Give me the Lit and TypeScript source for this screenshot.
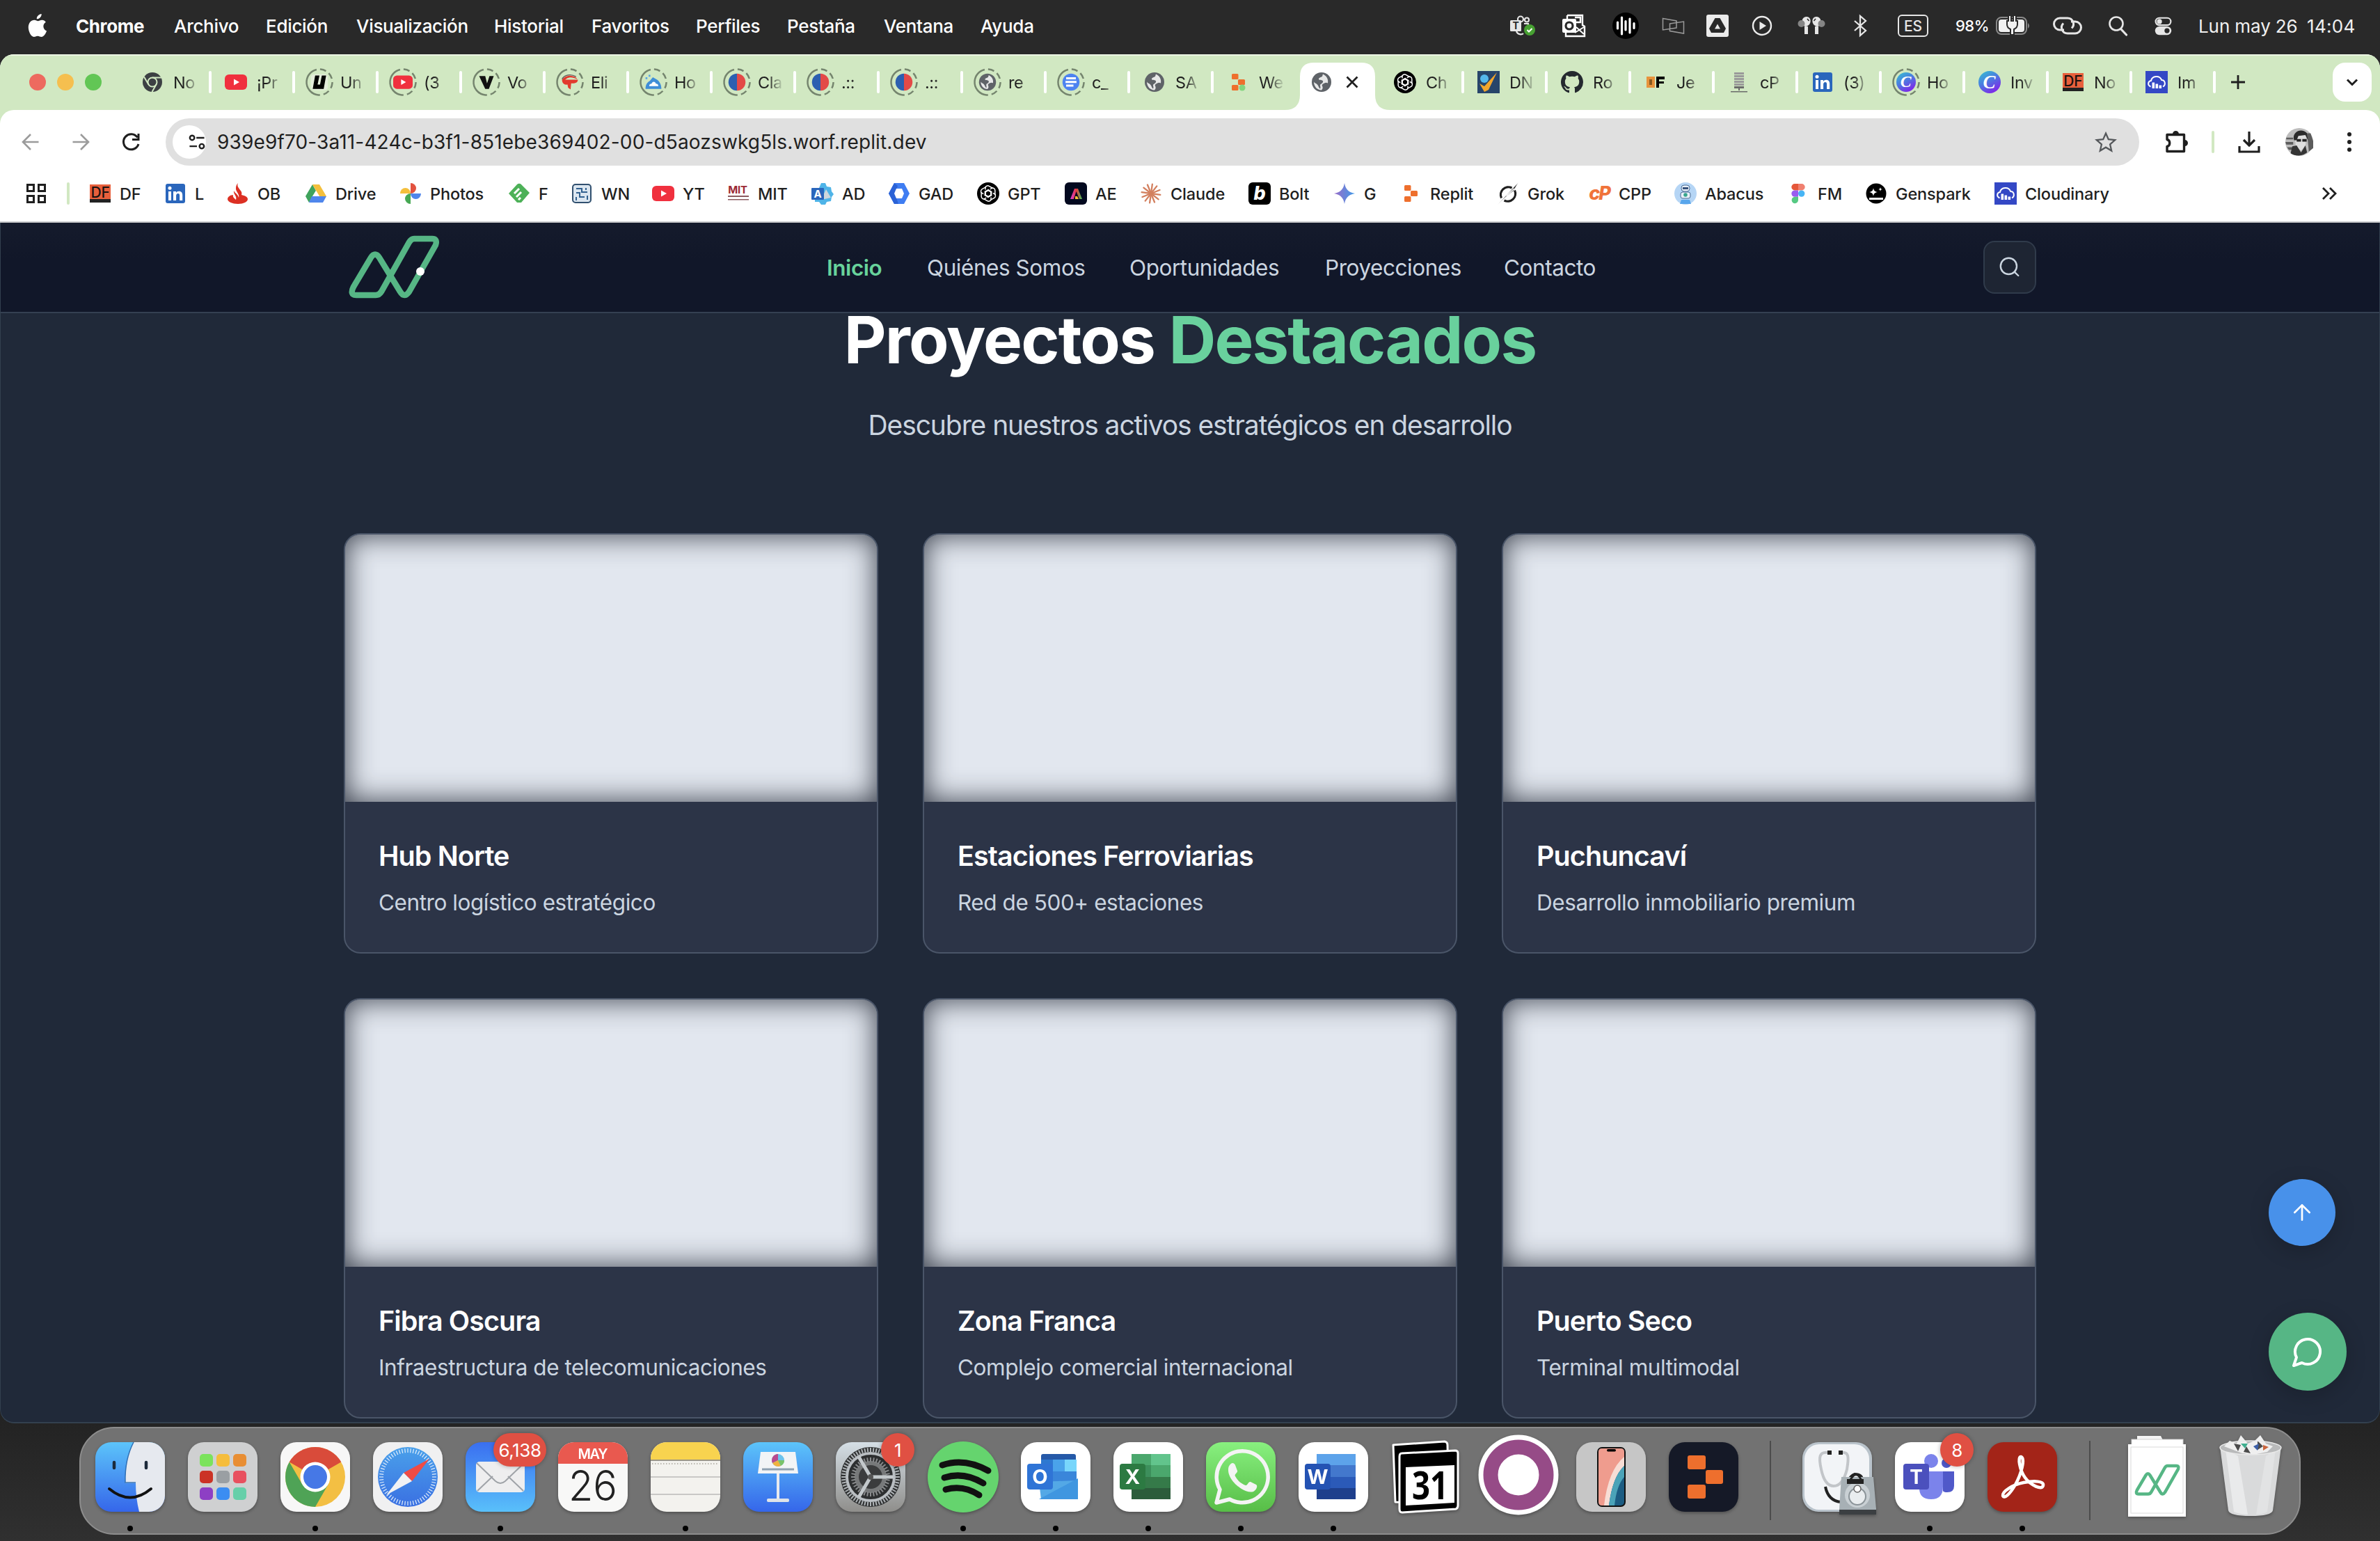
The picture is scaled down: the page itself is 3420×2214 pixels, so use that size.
import { LitElement, html, svg, css, nothing } from "lit";
import { customElement, property } from "lit/decorators.js";
import { styleMap } from "lit/directives/style-map.js";

/* ---------- small icons, drawn on a 32 x 32 board ---------- */

const txt = (s: string, x: number, y: number, size: number, fill: string) =>
  svg`<text x=${x} y=${y} font-size=${size} fill=${fill} text-anchor="middle" font-weight="700" font-family="Inter, 'Liberation Sans', sans-serif">${s}</text>`;

const globe = svg`<circle cx="16" cy="16" r="14" fill="#5f6368"/><path d="M18 4.500c-1 2 0 3-2 4s-4 1-4 3 3 1 5 2 1 3 0 4-3 1-3 3 1 3 0 5c-2-1-2-4-4-6s-4-2-5-4c0 7 5 12 11 12 2-2 2-4 1-6s1-3 3-4 3-1 5 0c1-5-1-10-7-13z" fill="#fff" opacity=".85"/>`;
const youtube = svg`<rect x="0" y="5" width="32" height="22" rx="6" fill="#f0303e"/><path d="M13 11.500l8 4.500-8 4.500z" fill="#fff"/>`;
const linkedin = svg`<rect x="2" y="2" width="28" height="28" rx="3" fill="#2a66bc"/><circle cx="8" cy="8.300" r="2.500" fill="#fff"/><path d="M6 13h4v13H6zM13 13h4v2c1-1.600 2.400-2.300 4.200-2.300 3.600 0 5 2.200 5 5.800V26h-4.100v-6.800c0-2-.6-3.100-2.300-3.100-1.800 0-2.700 1.300-2.700 3.200V26H13z" fill="#fff"/>`;
const dfRed = svg`<rect x="1" y="3" width="30" height="26" fill="#e8603c"/><rect x="1" y="24" width="30" height="5" fill="#222"/><text x="16" y="22" font-size="21" fill="#1a1210" text-anchor="middle" font-weight="500" font-family="Inter, sans-serif">DF</text>`;
const gpt = svg`<circle cx="16" cy="16" r="16" fill="#000"/><g fill="none" stroke="#fff" stroke-width="1.500">${[0, 60, 120, 180, 240, 300].map((a) => svg`<path d="M12 10.500V7.600c0-2 3-3.600 5.200-2.300l5.400 3.200M16 11.600l4.600 2.700v5.300" transform="rotate(${a} 16 16)"/>`)}</g>`;
const cloudinary = svg`<rect width="32" height="32" fill="#3448c5"/><path d="M7.500 22.500C2.500 20.500 3.500 14.500 8 14 9.500 6.500 20.500 6 23.200 13 28.500 13.200 29.500 20 25 22.500" fill="none" stroke="#fff" stroke-width="2"/><path d="M9.500 16.500h3.600V25H9.500zM14.500 18.500h3.600V25h-3.600zM19.500 20.500h3.600V25h-3.600z" fill="#fff"/>`;
const replit = svg`<g fill="#ee6f2d"><rect x="7" y="4" width="9.500" height="8" rx="1.500"/><rect x="16" y="12" width="10" height="8" rx="1.500"/><rect x="7" y="20" width="9.500" height="8" rx="1.500"/></g>`;
const canva = svg`<circle cx="16" cy="16" r="16" fill="url(#canva)"/><text x="15.500" y="24.500" font-size="27" font-style="italic" font-weight="700" fill="#fff" text-anchor="middle" font-family="Liberation Serif, serif">C</text>`;

const icons: Record<string, unknown> = {
  chrome: svg`<circle cx="16" cy="16" r="14" fill="#3c4043"/><circle cx="16" cy="16" r="6.500" fill="none" stroke="#d1e8c2" stroke-width="2"/><path d="M16 9.500h13M10.400 19.300L4 8.500M21.600 19.300L15.500 30" stroke="#d1e8c2" stroke-width="2"/>`,
  youtube,
  unitec: svg`<rect x="2" y="3" width="28" height="26" rx="5" fill="#e3ecda"/><path d="M9 5h7l-3 15h4l3-15h7l-4 22H5z" fill="#000"/>`,
  vee: svg`<path d="M4 6h10l3 12 4-12h7l-8 21h-6z" fill="#111"/>`,
  red: svg`<path d="M3 12c3-5 11-8 17-6 4 1 7 3 8 5-6-3-13-4-17-1l-3 2h21c0 4-3 6-9 6h-2l-1 10-4-3-1-5c-5 1-9-2-9-8z" fill="#e23a2e"/><path d="M3 11C7 4 17 2 26 7" fill="none" stroke="#5b5b5b" stroke-width="1.500"/>`,
  cloud: svg`<path d="M3 27c0-7 3-11 7-13l5-6 7 4c4 3 7 8 7 15z" fill="#3f8ed8"/><path d="M9 22.500c0-3 2-4 4-4 1-4 6-4 7 0 3 0 4 2 4 4z" fill="#fff"/><path d="M3 8h3v3H3zM8 4h3v3H8z" fill="#58a6e8"/>`,
  chile: svg`<path d="M16 2a14 14 0 000 28z" fill="#2c5fb0"/><path d="M16 2a14 14 0 010 28z" fill="#e34a47"/>`,
  globe,
  docs: svg`<circle cx="16" cy="16" r="14" fill="#4d83f0"/><path d="M8 8h16v3.500H8zM7 14h18v3.500H7zM8 20h12v3.500H8z" fill="#fff"/>`,
  replitGreen: svg`${replit}<circle cx="22" cy="24" r="4.500" fill="#83d67f"/>`,
  gpt,
  dnx: svg`<rect width="32" height="32" fill="#27456a"/><circle cx="10" cy="11" r="6" fill="#54b7ea"/><path d="M3 18l7 4L28 2 16 27l-6 3z" fill="#f2a62c"/>`,
  github: svg`<path d="M16 0C7.160 0 0 7.160 0 16c0 7.080 4.580 13.060 10.940 15.180.8.140 1.100-.34 1.100-.76 0-.38-.02-1.640-.02-2.980-4.020.74-5.060-.98-5.380-1.880-.18-.46-.96-1.880-1.640-2.260-.56-.3-1.360-1.040-.02-1.060 1.260-.02 2.160 1.160 2.460 1.640 1.440 2.420 3.740 1.740 4.660 1.320.14-1.040.56-1.740 1.020-2.140-3.560-.4-7.280-1.780-7.280-7.900 0-1.740.62-3.180 1.640-4.300-.16-.4-.72-2.040.16-4.240 0 0 1.340-.42 4.400 1.640 1.280-.36 2.640-.54 4-.54s2.720.18 4 .54c3.060-2.080 4.400-1.640 4.400-1.640.88 2.200.32 3.840.16 4.240 1.020 1.120 1.640 2.540 1.640 4.300 0 6.140-3.740 7.500-7.300 7.900.58.5 1.080 1.460 1.080 2.960 0 2.140-.02 3.860-.02 4.400 0 .42.300.92 1.100.76A16.020 16.020 0 0032 16C32 7.160 24.840 0 16 0z" fill="#24292f"/>`,
  dfGold: svg`<rect x="3" y="8" width="12" height="16" fill="#e8933c"/><rect x="7" y="12" width="4" height="8" fill="#8a5a20"/><path d="M17 8h12v4h-8v3h7v3h-7v6h-4z" fill="#000"/>`,
  server: svg`<g fill="#9a9a9a"><rect x="9" y="2" width="14" height="3"/><rect x="9" y="6" width="14" height="3"/><rect x="9" y="10" width="14" height="3"/><rect x="9" y="14" width="14" height="3"/><rect x="9" y="18" width="14" height="3"/></g><path d="M9 22h14v3H9zM15 25h2v3h-2zM4 29h24v1.500H4z" fill="#6a6a6a"/>`,
  linkedin, canva, dfRed, cloudinary, replit,
  santander: svg`<path d="M16 1c-2 4 1 7 3 10 2 2 3 4 2 7 5 1 9 3 9 6 0 4-6 7-14 7S1 28 1 24c0-3 4-6 8-6-1 3 2 5 4 7 2-5-4-8-3-13 1 3 6 5 7 10 2-5-5-9-4-14 0-3 1-5 3-7z" fill="#dc3023"/>`,
  drive: svg`<path d="M11 3h10l10 17-5 9H6L1 20z" fill="#fff"/><path d="M11 3L1 20l5 9 10-17z" fill="#3fa35c"/><path d="M11 3h10l10 17H21z" fill="#f4bf3c"/><path d="M10 20h21l-5 9H6z" fill="#4f86ec"/><path d="M16 12l5 8H11z" fill="#fff"/>`,
  photos: svg`<path d="M16 16V1a8 7.500 0 010 15z" fill="#e2523f"/><path d="M16 16h15a7.500 8 0 01-15 0z" fill="#4f86ec"/><path d="M16 16v15a8 7.500 0 010-15z" fill="#46a853"/><path d="M16 16H1a7.500 8 0 0115 0z" fill="#f4bf3c"/>`,
  feedly: svg`<path d="M13 3a4 4 0 016 0l12 12-12 14h-6L1 16z" fill="#4db158"/><path d="M9 16l7-7M12 21l7-7M15 25l3-3" stroke="#fff" stroke-width="3"/>`,
  board: svg`<rect x="3" y="3" width="26" height="26" rx="4" fill="#dbe6f0" stroke="#31506f" stroke-width="2"/><path d="M8 9h8v5h8M8 15h5v6h7M8 21v5M22 8v3M24 19v6" fill="none" stroke="#31608f" stroke-width="2"/>`,
  mit: svg`${txt("MIT", 15, 16, 15, "#9c2a35")}<path d="M1 19h30v2H1zM1 24h30v1.500H1z" fill="#8b5b60"/>`,
  azure: svg`<path d="M14 1h6l2 5 6 1 1 6 3 4-3 4-1 6-6 1-2 4h-6l-3-4H5V8h6z" fill="#4fb4e8"/><path d="M21 10l7 12-14 3z" fill="#cfd6dc"/><rect x="0" y="8" width="18" height="17" rx="1" fill="#2a66bc"/>${txt("A", 9, 22, 15, "#fff")}`,
  gad: svg`<path d="M9 1h14l8 15-8 15H9L1 16z" fill="#3f7df2"/><path d="M1 16L9 1l5 4-4 11 5 15H9z" fill="#2b62d6"/><path d="M12 9h8l3 7-3 7h-8l-3-7z" fill="#fff"/>`,
  adobe: svg`<rect width="32" height="32" rx="6" fill="#03091f"/><path d="M8 24l6-15h5l6 15h-4l-4.500-11L13 24z" fill="url(#rainbow)"/><path d="M15 20h3l2 4h-5z" fill="#f6c034"/>`,
  claude: svg`<g stroke="#d3805f" stroke-width="2.300" stroke-linecap="round">${[0, 30, 60, 90, 120, 150, 180, 210, 240, 270, 300, 330].map((a) => svg`<path d="M16 16V2.500" transform="rotate(${a + 8} 16 16)"/>`)}</g>`,
  bolt: svg`<rect width="32" height="32" rx="6" fill="#000"/><text x="16" y="25" font-size="27" font-weight="800" font-style="italic" fill="#fff" text-anchor="middle" font-family="Inter, sans-serif">b</text>`,
  gemini: svg`<path d="M16 1c1.500 9 6 13.500 15 15-9 1.500-13.500 6-15 15-1.500-9-6-13.500-15-15 9-1.500 13.500-6 15-15z" fill="url(#gem)"/>`,
  grok: svg`<path d="M6.500 22.500A11 11 0 0121.500 8M25.500 11.500A11 11 0 0110.500 26" fill="none" stroke="#1f1f1f" stroke-width="3.200"/><path d="M1.500 31.500L30.500 0.500 24 12 12.500 21z" fill="#1f1f1f" stroke="#fff" stroke-width=".6"/><path d="M13.500 19.500L25 9" stroke="#fff" stroke-width="1.600"/>`,
  cpanel: svg`<text x="16" y="25" font-size="27" font-style="italic" font-weight="800" fill="#f0733a" text-anchor="middle" letter-spacing="-2" font-family="Inter, sans-serif">cP</text>`,
  abacus: svg`<circle cx="16" cy="16" r="16" fill="#b5d5f5"/><rect x="10" y="4" width="12" height="9" rx="4" fill="#e8f0f8" stroke="#4a6b94"/><rect x="12" y="7" width="8" height="3" fill="#35507a"/><rect x="9" y="14" width="14" height="9" rx="3" fill="#e8f0f8" stroke="#4a6b94"/><circle cx="16" cy="18" r="2.800" fill="#38a58c"/><path d="M10 25h12l2 6H8z" fill="#59a6ec"/>`,
  figma: svg`<path d="M16 2h-5a4.700 4.700 0 000 9.400h5z" fill="#e5573a"/><path d="M16 2h5a4.700 4.700 0 010 9.400h-5z" fill="#f08070"/><path d="M16 11.400h-5a4.700 4.700 0 000 9.400h5z" fill="#9a5cf0"/><circle cx="20.700" cy="16.100" r="4.700" fill="#47b5f5"/><path d="M16 20.800h-5a4.700 4.700 0 105 4.700z" fill="#56c983"/>`,
  genspark: svg`<circle cx="16" cy="16" r="14.500" fill="#000"/><path d="M12 8c.7 4 2 5.300 6 6-4 .7-5.300 2-6 6-.7-4-2-5.300-6-6 4-.7 5.300-2 6-6zM22 7c.3 2 1 2.700 3 3-2 .3-2.700 1-3 3-.3-2-1-2.700-3-3 2-.3 2.700-1 3-3z" fill="#fff"/><path d="M6 22h20v3H6z" fill="#fff"/>`,
  apps: svg`<g fill="none" stroke="#1f1f1f" stroke-width="3"><rect x="3.500" y="3.500" width="9" height="9"/><rect x="19.500" y="3.500" width="9" height="9"/><rect x="3.500" y="19.500" width="9" height="9"/><rect x="19.500" y="19.500" width="9" height="9"/></g>`,

  teamsBar: svg`<g fill="none" stroke="#e6e6e6" stroke-width="2.200"><circle cx="15" cy="6.500" r="4"/><circle cx="24" cy="7.500" r="3"/><path d="M20 13h6v6M9 24c2 5 8 5 10 3"/></g><rect x="0" y="8" width="16" height="16" rx="1.500" fill="#e6e6e6"/>${txt("T", 8, 21, 14, "#292929")}<circle cx="28" cy="22" r="8" fill="#47a132"/><path d="M24.500 22l2.500 2.500 4.500-4.500" fill="none" stroke="#fff" stroke-width="2"/>`,
  outlookBar: svg`<path d="M7 1h22v14l3 2v14H5v-6M7 6V1M18 4h8v7h-8" fill="none" stroke="#fff" stroke-width="2.400"/><path d="M20 18l11 10M31 18L18 26" stroke="#fff" stroke-width="2"/><rect x="0" y="6" width="20" height="20" rx="2" fill="#fff"/><circle cx="10" cy="16" r="5" fill="none" stroke="#292929" stroke-width="3.200"/>`,
  wave: svg`<circle cx="16" cy="16" r="19" fill="#000"/><path d="M4.500 12v9M10.500 5v24M16 10.500v12.500M22 7v20M28 13.500v7" stroke="#fff" stroke-width="3.200" stroke-linecap="round" transform="translate(0 -1)"/>`,
  screens: svg`<path d="M1.500 5.500L21 9v10L1.500 22zM11.500 13L31.500 10v17l-20-3.500z" fill="none" stroke="#9a9a9a" stroke-width="1.500"/>`,
  driveBar: svg`<rect width="32" height="32" rx="3" fill="#ebebeb"/><path d="M12.500 5h7l8.500 15-3 6H7l-3-6z" fill="#292929"/><path d="M16 13.500l4 7h-8z" fill="#ebebeb"/>`,
  playBar: svg`<circle cx="16" cy="16" r="13" fill="none" stroke="#ebebeb" stroke-width="2.400"/><path d="M12.500 10l9.500 6-9.500 6z" fill="#ebebeb"/>`,
  pods: svg`<g fill="#e6e6e6"><path d="M3 7c2-5 9-5 11-1 2 5-1 10-6 11-4 0-7-5-5-10z"/><path d="M29 7c-2-5-9-5-11-1-2 5 1 10 6 11 4 0 7-5 5-10z"/><rect x="6" y="17" width="5" height="11"/><rect x="21" y="17" width="5" height="11"/></g><circle cx="1.500" cy="13" r="5" fill="#858585"/><circle cx="30.500" cy="13" r="5" fill="#858585"/><path d="M10 6l2.500 3M22 6l-2.500 3" stroke="#292929" stroke-width="1.500"/>`,
  bluetooth: svg`<path d="M8 9l16 14-8 7V2l8 7L8 23" fill="none" stroke="#e6e6e6" stroke-width="2.300"/>`,
  link: svg`<g fill="none" stroke="#e6e6e6" stroke-width="3"><path d="M11 22H5a8.500 8.500 0 010-17h11a8.500 8.500 0 016 14.500"/><path d="M21 10h6a8.500 8.500 0 010 17H16a8.500 8.500 0 01-6-14.500"/></g>`,
  searchBar: svg`<circle cx="14" cy="13" r="9.500" fill="none" stroke="#e6e6e6" stroke-width="2.600"/><path d="M21 21l7.500 8" stroke="#e6e6e6" stroke-width="3.200" stroke-linecap="round"/>`,
  control: svg`<rect x="4" y="3" width="24" height="11.500" rx="5.700" fill="none" stroke="#e6e6e6" stroke-width="2.400"/><circle cx="10" cy="8.700" r="4" fill="#e6e6e6"/><rect x="3" y="16.500" width="26" height="13.500" rx="6.700" fill="#e6e6e6"/><circle cx="22" cy="23.200" r="4" fill="#292929"/>`,

  back: svg`<path d="M27.500 16H6M16 5L5 16l11 11" fill="none" stroke="#9b9b9b" stroke-width="2.600"/>`,
  forward: svg`<path d="M4.500 16H26M16 5l11 11-11 11" fill="none" stroke="#9b9b9b" stroke-width="2.600"/>`,
  reload: svg`<path d="M25.500 9.500A11 11 0 1027 19M27 4v8.500h-9" fill="none" stroke="#1f1f1f" stroke-width="3"/>`,
  tune: svg`<g fill="none" stroke="#1f1f1f" stroke-width="3"><circle cx="7.500" cy="8.500" r="4"/><path d="M15 8.500h14M3 23.500h13"/><circle cx="24.500" cy="23.500" r="4"/></g>`,
  star: svg`<path d="M16 3.500l3.800 8.700 9.400.9-7.100 6.300 2.100 9.200-8.200-4.900-8.200 4.900 2.100-9.200-7.100-6.300 9.400-.9z" fill="none" stroke="#55585b" stroke-width="2.300"/>`,
  puzzle: svg`<path d="M3 5.500h24.500V29.500H3V22.500c5-1 5-9 0-10z" fill="none" stroke="#1f1f1f" stroke-width="3.400" stroke-linejoin="round"/><path d="M11 4.500a4.500 4.500 0 019 0zM28.500 13a4.500 4.500 0 010 9z" fill="#1f1f1f"/>`,
  download: svg`<path d="M16 1v19M8 13l8 8 8-8M2 22v8h28v-8" fill="none" stroke="#1f1f1f" stroke-width="3.200"/>`,
  dots: svg`<g fill="#1f1f1f"><circle cx="16" cy="5" r="3"/><circle cx="16" cy="16" r="3"/><circle cx="16" cy="27" r="3"/></g>`,
  avatar: svg`<circle cx="16" cy="16" r="16" fill="#bdbdbd"/><path d="M0 16h9v3H1zM2 22h8v3H4zM1 11h8v2H1zM25 6h4l3 9v8l-5 4z" fill="#5c5c5c"/><path d="M11 11C10 5 24 4 24 11l-1 9-5 6-6-5z" fill="#dedede"/><path d="M10 14C7 4 19-1 25 6l1 8-3-6-8 1-2 5z" fill="#2b2b2b"/><path d="M13 12.500h5v3h-5zM19.500 12.500h5v3h-5z" fill="#222"/><path d="M8 21l5-1 5 8 5-8 2 8a16 16 0 01-19 1z" fill="#353535"/>`,
};

const defs = svg`<defs>
  <linearGradient id="canva" x1="0" y1="0" x2=".6" y2="1"><stop offset="0" stop-color="#35c5cf"/><stop offset=".5" stop-color="#4a7de0"/><stop offset="1" stop-color="#7d2ae8"/></linearGradient>
  <linearGradient id="rainbow"><stop offset="0" stop-color="#d63fe0"/><stop offset=".5" stop-color="#e8383c"/><stop offset="1" stop-color="#40c45c"/></linearGradient>
  <linearGradient id="gem"><stop offset="0" stop-color="#9a6cc8"/><stop offset="1" stop-color="#3f9ae8"/></linearGradient>
</defs>`;

const icon = (name: string, size = 32) =>
  html`<svg class="icon" width=${size} height=${size} viewBox="0 0 32 32">${defs}${icons[name]}</svg>`;

const base = css`
  * { box-sizing: border-box; }
  :host { display: block; font-family: Inter, "Liberation Sans", sans-serif; }
  .icon { display: block; overflow: visible; flex: none; }
`;

/* ---------- system menu bar ---------- */

/* each entry carries the width of its slot, gap included */
const MENUS: [string, number][] = [
  ["Archivo", 132], ["Edición", 130], ["Visualización", 198], ["Historial", 140], ["Favoritos", 150],
  ["Perfiles", 131], ["Pestaña", 139], ["Ventana", 139], ["Ayuda", 90],
];
const STATUS_LEFT: [string, number][] = [
  ["teamsBar", 75], ["outlookBar", 75], ["wave", 68], ["screens", 64], ["driveBar", 64], ["playBar", 71], ["pods", 70], ["bluetooth", 55],
];

@customElement("system-menubar")
export class SystemMenubar extends LitElement {
  static styles = [base, css`
    :host { height: 78px; background: #292929; color: #fff; }
    .bar { display: flex; height: 74px; align-items: center; padding: 0 34px 0 38px; font-size: 26px; font-weight: 500; letter-spacing: -0.3px; white-space: nowrap; }
    .apple { width: 71px; }
    .app { width: 141px; font-weight: 700; letter-spacing: -0.4px; }
    .slot { flex: none; }
    .fill { flex: 1; }
    .search { width: 73px; padding-left: 40px; }
    .control { width: 66px; padding-left: 34px; }
    .lang { width: 44px; height: 32px; margin: 0 39px 0 15px; border: 2.500px solid #e6e6e6; border-radius: 6px; display: grid; place-items: center; font-size: 21px; letter-spacing: 0; color: #e6e6e6; }
    .pct { font-size: 22px; width: 58px; letter-spacing: -0.5px; }
    .battery { width: 87px; }
    .date { margin-left: 33px; width: 156px; color: #f0f0f0; font-weight: 400; letter-spacing: -0.1px; }
    .time { color: #f0f0f0; font-weight: 400; width: 71px; letter-spacing: 0.3px; }
  `];
  render() {
    return html`<div class="bar">
      <div class="apple"><svg class="icon" width="32" height="34" viewBox="0 0 32 36"><path d="M22 0c.3 4-3.300 8-7.300 7.800C14.300 4 18 .3 22 0zM28.500 12.500c-5.500 3.500-4.500 11 1.300 13.500-1 3-4 9-8 9-2.200 0-3-1.400-5.700-1.400S12.500 35 10.500 35C5.500 35 2 26 2 20.500 2 13.500 6.500 9.300 11 9.300c2.400 0 4.300 1.600 5.700 1.600s3.600-1.800 6.300-1.700c2 .1 4.200 1.100 5.500 3.300z" fill="#fff"/></svg></div>
      <div class="app">Chrome</div>
      ${MENUS.map(([label, w]) => html`<div class="slot" style=${styleMap({ width: w + "px" })}>${label}</div>`)}
      <div class="fill"></div>
      ${STATUS_LEFT.map(([name, w]) => html`<div class="slot" style=${styleMap({ width: w + "px" })}>${icon(name)}</div>`)}
      <div class="lang">ES</div>
      <div class="pct">98%</div>
      <div class="battery"><svg class="icon" width="50" height="28" viewBox="0 0 50 28"><rect x="1" y="2" width="43" height="24" rx="7" fill="none" stroke="#8a8a8a" stroke-width="2"/><rect x="4" y="5" width="37" height="18" rx="4" fill="#f0f0f0"/><path d="M46 10q4 4 0 8z" fill="#8a8a8a"/><path d="M18 -1v8h-2v5c0 5 3 6 5 7v8h5v-8c2-1 5-2 5-7V7h-2v-8h-4v8h-3v-8z" fill="#f0f0f0" stroke="#292929" stroke-width="2"/></svg></div>
      <div class="slot">${icon("link")}</div>
      <div class="slot search">${icon("searchBar")}</div>
      <div class="slot control">${icon("control", 29)}</div>
      <div class="date">Lun may 26</div>
      <div class="time">14:04</div>
    </div>`;
  }
}

/* ---------- browser tabs, toolbar and bookmarks ---------- */

type Tab = { icon: string; title: string; ring?: boolean; active?: boolean };
const TABS: Tab[] = [
  { icon: "chrome", title: "No" }, { icon: "youtube", title: "¡Pr" }, { icon: "unitec", title: "Un", ring: true },
  { icon: "youtube", title: "(3", ring: true }, { icon: "vee", title: "Vo", ring: true }, { icon: "red", title: "Eli", ring: true },
  { icon: "cloud", title: "Ho", ring: true }, { icon: "chile", title: "Cla", ring: true }, { icon: "chile", title: ".::", ring: true },
  { icon: "chile", title: ".::", ring: true }, { icon: "globe", title: "re", ring: true }, { icon: "docs", title: "c_", ring: true },
  { icon: "globe", title: "SA" }, { icon: "replitGreen", title: "We" }, { icon: "globe", title: "", active: true },
  { icon: "gpt", title: "Ch" }, { icon: "dnx", title: "DN" }, { icon: "github", title: "Ro" }, { icon: "dfGold", title: "Je" },
  { icon: "server", title: "cP" }, { icon: "linkedin", title: "(3)" }, { icon: "canva", title: "Ho", ring: true },
  { icon: "canva", title: "Inv" }, { icon: "dfRed", title: "No" }, { icon: "cloudinary", title: "Im" },
];

/* icon, label, distance from this icon to the next one */
const BOOKMARKS: [string, string, number][] = [
  ["dfRed", "DF", 108], ["linkedin", "L", 90], ["santander", "OB", 112], ["drive", "Drive", 136], ["photos", "Photos", 156],
  ["feedly", "F", 90], ["board", "WN", 117], ["youtube", "YT", 108], ["mit", "MIT", 121], ["azure", "AD", 110],
  ["gad", "GAD", 128], ["gpt", "GPT", 126], ["adobe", "AE", 108], ["claude", "Claude", 156], ["bolt", "Bolt", 122],
  ["gemini", "G", 95], ["replit", "Replit", 140], ["grok", "Grok", 131], ["cpanel", "CPP", 124], ["abacus", "Abacus", 162],
  ["figma", "FM", 112], ["genspark", "Genspark", 186], ["cloudinary", "Cloudinary", 170],
];

@customElement("browser-bars")
export class BrowserBars extends LitElement {
  static styles = [base, css`
    :host { background: #fff; color: #1f1f1f; }
    .strip { height: 80px; background: #d1e8c2; box-shadow: inset 0 2px #ecf6e4; display: flex; align-items: center; padding-left: 42px; }
    .lights { display: flex; gap: 16px; width: 140px; }
    .light { width: 24px; height: 24px; border-radius: 50%; }
    .close { background: #ed6a5f; }
    .min { background: #f5bf4f; }
    .max { background: #62c655; }
    .tab { width: 120px; height: 80px; display: flex; align-items: center; gap: 14px; padding-left: 21px; position: relative; flex: none; }
    .tab::after { content: ""; position: absolute; right: -2px; top: 24px; width: 4px; height: 32px; border-radius: 2px; background: #fff; }
    .tab.plain::after { display: none; }
    .fav { width: 32px; height: 32px; display: grid; place-items: center; position: relative; flex: none; }
    .ring { position: absolute; inset: -4px; overflow: visible; }
    .title { width: 36px; white-space: nowrap; font-size: 23.500px; letter-spacing: -0.4px; mask-image: linear-gradient(90deg, #000 40%, rgba(0, 0, 0, 0.120) 96%); }
    .shape { position: absolute; left: -16px; top: 12px; }
    .x { position: relative; }
    .plus { margin-left: 18px; }
    .more { margin-left: auto; margin-right: 12px; width: 56px; height: 56px; border-radius: 18px; background: #fff; display: grid; place-items: center; }
    .under { background: #d1e8c2; }
    .toolbar { height: 92px; background: #fff; border-radius: 20px 20px 0 0; display: flex; align-items: center; padding: 0 28px; }
    .nav { display: flex; gap: 40px; width: 213px; }
    .omni { width: 2836px; height: 68px; border-radius: 34px; background: #e0e0e0; display: flex; align-items: center; padding: 0 32px 0 10px; flex: none; font-size: 28px; letter-spacing: 0.15px; }
    .site { width: 48px; height: 48px; border-radius: 50%; background: #fff; display: grid; place-items: center; margin-right: 16px; }
    .omni .icon:last-child { margin-left: auto; }
    .tools { display: flex; align-items: center; flex: 1; }
    .ext { margin-left: 37px; }
    .sep { width: 4px; height: 32px; background: #d1e8c2; border-radius: 2px; }
    .tools .sep { margin: 0 34px 0 35px; }
    .me { margin-left: 36px; }
    .menu { margin-left: 36px; }
    .marks { height: 68px; padding: 0 0 12px 36px; display: flex; align-items: center; font-size: 23.500px; font-weight: 450; letter-spacing: -0.15px; white-space: nowrap; }
    .marks .sep { margin: 0 28px; }
    .mark { display: flex; align-items: center; gap: 12px; flex: none; }
    .over { margin-left: auto; margin-right: 61px; }
    .line { height: 2px; background: #c9cacc; }
  `];
  private tab(t: Tab, i: number) {
    const plain = t.active || TABS[i + 1]?.active;
    return html`<div class="tab ${plain ? "plain" : ""}">
      ${t.active ? html`<svg class="shape" width="152" height="68" viewBox="0 0 152 68"><path d="M0 68q22 0 22-22V20Q22 0 42 0h68q20 0 20 20v26q0 22 22 22z" fill="#fff"/></svg>` : nothing}
      <div class="fav">
        ${t.ring ? html`<svg class="ring" width="40" height="40" viewBox="0 0 40 40"><circle cx="20" cy="20" r="18.500" fill="none" stroke="#75856e" stroke-width="2.500" stroke-dasharray="52 5 9 5 9 5 9 5 9 5" transform="rotate(95 20 20)"/></svg>` : nothing}
        ${icon(t.icon, t.ring ? 28 : 32)}
      </div>
      ${t.active
        ? html`<svg class="icon x" width="28" height="28" viewBox="0 0 28 28"><path d="M6.500 6.500l15 15M21.500 6.500l-15 15" stroke="#1f1f1f" stroke-width="2.800"/></svg>`
        : html`<div class="title">${t.title}</div>`}
    </div>`;
  }
  render() {
    return html`
      <div class="strip">
        <div class="lights"><div class="light close"></div><div class="light min"></div><div class="light max"></div></div>
        ${TABS.map((t, i) => this.tab(t, i))}
        <svg class="icon plus" width="32" height="32" viewBox="0 0 32 32"><path d="M16 6v20M6 16h20" stroke="#1f1f1f" stroke-width="2.800"/></svg>
        <div class="more"><svg width="20" height="20" viewBox="0 0 20 20"><path d="M3 6.500l7 7 7-7" fill="none" stroke="#1f1f1f" stroke-width="3"/></svg></div>
      </div>
      <div class="under"><div class="toolbar">
        <div class="nav">${icon("back")}${icon("forward")}${icon("reload")}</div>
        <div class="omni"><div class="site">${icon("tune", 26)}</div><span>939e9f70-3a11-424c-b3f1-851ebe369402-00-d5aozswkg5ls.worf.replit.dev</span>${icon("star")}</div>
        <div class="tools"><div class="ext">${icon("puzzle")}</div><div class="sep"></div>${icon("download")}<div class="me">${icon("avatar", 40)}</div><div class="menu">${icon("dots")}</div></div>
      </div></div>
      <div class="marks">
        ${icon("apps")}<div class="sep"></div>
        ${BOOKMARKS.map(([ic, label, w]) => html`<div class="mark" style=${styleMap({ width: w + "px" })}>${icon(ic)}<span>${label}</span></div>`)}
        <svg class="icon over" width="24" height="24" viewBox="0 0 24 24"><path d="M3 4l8 8-8 8M13 4l8 8-8 8" fill="none" stroke="#1f1f1f" stroke-width="2.800"/></svg>
      </div>
      <div class="line"></div>`;
  }
}

/* ---------- web page ---------- */

@customElement("project-card")
export class ProjectCard extends LitElement {
  @property() name = "";
  @property() detail = "";
  static styles = [base, css`
    :host { height: 604px; border: 2px solid #4a5568; border-radius: 24px; background: #2c3447; overflow: hidden; }
    .photo { height: 384px; background: #e2e7ef; box-shadow: inset 0 0 42px rgba(26, 32, 44, 0.880); }
    .body { padding: 50px 48px 0; }
    .name { font-size: 39.500px; line-height: 56px; font-weight: 600; letter-spacing: -0.900px; color: #fff; }
    .detail { margin-top: 15px; font-size: 31.500px; line-height: 48px; letter-spacing: -0.440px; color: #cbd5e0; }
  `];
  render() {
    return html`<div class="photo"></div><div class="body"><div class="name">${this.name}</div><div class="detail">${this.detail}</div></div>`;
  }
}

const NAV: [string, number][] = [["Inicio", 144], ["Quiénes Somos", 291], ["Oportunidades", 281], ["Proyecciones", 257], ["Contacto", 140]];
const PROJECTS: [string, string][] = [
  ["Hub Norte", "Centro logístico estratégico"],
  ["Estaciones Ferroviarias", "Red de 500+ estaciones"],
  ["Puchuncaví", "Desarrollo inmobiliario premium"],
  ["Fibra Oscura", "Infraestructura de telecomunicaciones"],
  ["Zona Franca", "Complejo comercial internacional"],
  ["Puerto Seco", "Terminal multimodal"],
];
const LOGO = "M10 85H38Q43 85 46 80L86 9Q89 4 93 4H119Q127 4 124 13L86 80Q79 90 73 80L43 31Q37 22 31 31L6 73Q0 85 10 85Z";

@customElement("site-page")
export class SitePage extends LitElement {
  static styles = [base, css`
    :host { height: 1725px; overflow: hidden; position: relative; background: #202939; border: 0 solid #33404f; border-width: 0 1px 2px; border-radius: 0 0 20px 20px; }
    .head { height: 130px; background: linear-gradient(#151b2c, #111729 40%); border-bottom: 2px solid #344052; display: flex; align-items: center; padding: 0 493px 0 501px; justify-content: space-between; }
    .links { display: flex; font-size: 31.500px; letter-spacing: -0.450px; color: #cbd5e0; margin-left: 7px; white-space: nowrap; }
    .on { color: #68d39b; font-weight: 600; }
    .search { width: 76px; height: 76px; border: 2px solid #303b4b; border-radius: 16px; background: #1e2533; display: grid; place-items: center; }
    .intro { height: 316px; text-align: center; }
    h2 { margin: 0; position: relative; top: -3px; font-size: 94px; line-height: 82px; font-weight: 700; letter-spacing: -1.850px; color: #fff; }
    h2 span { color: #69d19d; }
    .lead { margin-top: 49px; font-size: 39px; line-height: 60px; letter-spacing: -1.080px; color: #cbd5e0; }
    .grid { display: grid; grid-template-columns: repeat(3, 768px); gap: 64px; padding-left: 493px; }
    .fab { position: absolute; left: 3259px; border-radius: 50%; display: grid; place-items: center; box-shadow: 0 8px 30px rgba(0, 0, 0, 0.180); }
    .up { top: 1374px; width: 96px; height: 96px; background: #4891ea; }
    .chat { top: 1566px; width: 112px; height: 112px; background: #56b685; }
  `];
  render() {
    return html`
      <div class="head">
        <svg class="icon" width="130" height="90" viewBox="0 0 130 90"><path d=${LOGO} fill="none" stroke="#56b685" stroke-width="8.500"/><circle cx="102" cy="51" r="6" fill="#fff"/></svg>
        <div class="links">${NAV.map(([label, w], i) => html`<div class=${i === 0 ? "on" : ""} style=${styleMap({ width: w + "px" })}>${label}</div>`)}</div>
        <div class="search"><svg width="32" height="32" viewBox="0 0 24 24" fill="none" stroke="#cbd5e0" stroke-width="1.800" stroke-linecap="round"><circle cx="10.800" cy="10.800" r="8.700"/><path d="M17 17l4.200 4"/></svg></div>
      </div>
      <div class="intro"><h2>Proyectos <span>Destacados</span></h2><div class="lead">Descubre nuestros activos estratégicos en desarrollo</div></div>
      <div class="grid">${PROJECTS.map(([n, d]) => html`<project-card .name=${n} .detail=${d}></project-card>`)}</div>
      <div class="fab up"><svg width="32" height="32" viewBox="0 0 24 24" fill="none" stroke="#fff" stroke-width="2" stroke-linecap="round" stroke-linejoin="round"><path d="M12 20V4M4 12l8-8 8 8"/></svg></div>
      <div class="fab chat"><svg width="48" height="48" viewBox="0 0 24 24" fill="none" stroke="#fff" stroke-width="2" stroke-linecap="round" stroke-linejoin="round"><path d="M7.900 20A9 9 0 1 0 4 16.100L2 22Z"/></svg></div>`;
  }
}

/* ---------- dock, icons on a 100 x 100 board ---------- */

const tile = (fill: string) => svg`<rect width="100" height="100" rx="23" fill=${fill}/>`;
const office = (letter: string, sq: string, rows: unknown) => svg`${tile("#fff")}${rows}<rect x="9" y="31" width="37" height="37" rx="4" fill=${sq}/>${txt(letter, 27.500, 60, 29, "#fff")}`;
const PADS = ["#7be35c", "#f5bd3c", "#e88e34", "#cb3326", "#9a9fa3", "#e8505f", "#8d3fc4", "#3b8df2", "#67cfa9"];
const ticks = (n: number, r1: number, r2: number, c: string, w: number) =>
  Array.from({ length: n }, (_, i) => svg`<path d="M50 ${50 - r1}V${50 - r2}" stroke=${c} stroke-width=${w} transform="rotate(${(i * 360) / n} 50 50)"/>`);

const dockArt: Record<string, unknown> = {
  finder: svg`${tile("url(#dsky)")}<path d="M55 0h22a23 23 0 0123 23v54a23 23 0 01-23 23H63q-5-20-5-41H43q-1-34 12-59z" fill="#e6e9ef"/><path d="M27 29v8M73 29v8" stroke="#1c2a3a" stroke-width="4.500" stroke-linecap="round"/><path d="M20 67q30 25 60 0" fill="none" stroke="#111" stroke-width="4" stroke-linecap="round"/><path d="M55 0Q42 25 43 58h15" fill="none" stroke="#2f6fb4" stroke-width="1.500"/>`,
  launchpad: svg`${tile("#cfd0d1")}${PADS.map((c, i) => svg`<rect x=${17 + (i % 3) * 24} y=${17 + Math.floor(i / 3) * 24} width="19" height="18" rx="5" fill=${c}/>`)}`,
  chrome: svg`${tile("#f7f7f7")}<circle cx="50" cy="50" r="43" fill="#f3bf43"/><path d="M50 50L12.800 28.500A43 43 0 0187.200 28.500z" fill="#d94b3a"/><path d="M12.800 28.500A43 43 0 0050 93l18.600-32.200L31.400 60.700z" fill="#4fa356"/><circle cx="50" cy="50" r="21.500" fill="#fff"/><circle cx="50" cy="50" r="17" fill="#4678e6"/>`,
  safari: svg`${tile("#f0f0f1")}<circle cx="50" cy="50" r="43" fill="url(#dblue)"/>${ticks(60, 41, 35, "#e3effb", 1.200)}<path d="M81 24L56 56 44 44z" fill="#ef4b45"/><path d="M19 76l25-32 12 12z" fill="#f1f2f4"/>`,
  mail: svg`${tile("url(#dmail)")}<rect x="15" y="28" width="70" height="44" rx="5" fill="#eeeeef"/><path d="M17 70l22-21M83 70L61 49M16 30l27 26q7 6 14 0l27-26" fill="none" stroke="#9fa3a8" stroke-width="2"/>`,
  calendar: svg`${tile("#f8f8f7")}<path d="M0 31V23A23 23 0 0123 0h54a23 23 0 0123 23v8z" fill="#e9594f"/><text x="50" y="24" font-size="20" font-weight="600" fill="#fff" text-anchor="middle" font-family="Inter, sans-serif" textLength="43">MAY</text><text x="50" y="84" font-size="61" font-weight="300" fill="#222" text-anchor="middle" font-family="Inter, sans-serif" textLength="70" lengthAdjust="spacingAndGlyphs">26</text>`,
  notes: svg`${tile("#f3f2ee")}<path d="M0 25V23A23 23 0 0123 0h54a23 23 0 0123 23v2z" fill="#f8d34f"/><path d="M0 26h100" stroke="#9c9788" stroke-width="2"/><path d="M2 31h96" stroke="#b9b6ae" stroke-width="2" stroke-dasharray="1.500 2.500"/><path d="M0 50h100M0 75h100" stroke="#c9c8c6" stroke-width="2"/>`,
  keynote: svg`${tile("url(#dsky)")}<path d="M25 14h50l4 31H21z" fill="#f2f4f6"/><path d="M27 39h46" stroke="#8fa1b2" stroke-width="3"/><circle cx="50" cy="26" r="9" fill="#6cc3ec"/><path d="M50 26V17a9 9 0 00-8 13z" fill="#b84a8f"/><path d="M50 26l-8 4a9 9 0 0012 4z" fill="#f0b23f"/><path d="M50 26l4 8a9 9 0 005-8z" fill="#7ac36a"/><path d="M50 45v37" stroke="#e8eaee" stroke-width="4"/><rect x="34" y="81" width="32" height="5" rx="2" fill="#dfe3e8"/>`,
  settings: svg`${tile("url(#dgrey)")}<circle cx="50" cy="50" r="43" fill="#2d2f30"/>${ticks(60, 42, 36, "#aeb3b6", 2)}<circle cx="50" cy="50" r="34" fill="none" stroke="#b9bec2" stroke-width="4"/><circle cx="50" cy="50" r="23" fill="#77797a"/>${ticks(36, 28, 22, "#8a8c8e", 2)}<circle cx="50" cy="50" r="17" fill="#3b3c3d"/><path d="M50 50h33M50 50L33 21M50 50L33 79" stroke="#c3c8cb" stroke-width="5"/><circle cx="50" cy="50" r="4" fill="#555"/>`,
  spotify: svg`<circle cx="50" cy="50" r="51" fill="#65d46e"/><path d="M20 33q32-11 66 8M23 51q28-9 56 8M25 68q25-7 48 8" fill="none" stroke="#111" stroke-width="9" stroke-linecap="round"/>`,
  outlook: office("O", "#2f74d6", svg`<rect x="29" y="17" width="50" height="14" rx="3" fill="#2559a8"/><path d="M29 25h17v17H29z" fill="#2e78d0"/><path d="M46 25h17v17H46z" fill="#4aa3ea"/><path d="M63 25h17v17H63z" fill="#78d6fb"/><path d="M29 42h51v20H29z" fill="#3a86da"/><path d="M26 57l56-2v27H29z" fill="#53a8e6"/><path d="M26 82l56-30v30z" fill="#3f96e0"/>`),
  excel: office("X", "#2c7a42", svg`<path d="M26 17h28v17H26z" fill="#4ba76d"/><path d="M54 17h28v17H54z" fill="#62c48c"/><path d="M26 33h28v17H26z" fill="#3d8f5c"/><path d="M54 33h28v17H54z" fill="#4ba76d"/><path d="M26 50h56v16H26z" fill="#357a49"/><path d="M26 66h56v16H26z" fill="#2c5c3b"/>`),
  whatsapp: svg`${tile("url(#dgreen)")}<path d="M15 87l5-19A37 37 0 1134 82z" fill="none" stroke="#f4f4f4" stroke-width="5.500" stroke-linejoin="round"/><path d="M34 33c3-5 7-3 8 0l3 8c1 3-5 5-3 8 4 7 9 11 15 13 3 0 4-6 7-5l8 4c3 2 0 8-4 10-13 4-37-16-36-32 0-3 1-5 2-6z" fill="#f4f4f4"/>`,
  word: office("W", "#2453b3", svg`<path d="M26 17h56v17H26z" fill="#5da3ea"/><path d="M26 33h56v17H26z" fill="#4378cd"/><path d="M26 50h56v16H26z" fill="#2b5ab8"/><path d="M26 66h56v16H26z" fill="#1e3f8c"/>`),
  notion: svg`<path d="M3 4L77 -1Q81 0 81 4L83 88 6 86z" fill="#000" stroke="#fff" stroke-width="3" stroke-linejoin="round"/><path d="M15 16l77-4q4 0 4 4v75q0 4-3 5l-77 5q-4 0-4-5V21q0-5 3-5z" fill="#000" stroke="#fff" stroke-width="3"/><path d="M21 36l70-3v54l-70 4z" fill="#fff"/><text x="56" y="82" font-size="56" font-weight="700" fill="#000" text-anchor="middle" font-family="Noto Sans, sans-serif" textLength="52" lengthAdjust="spacingAndGlyphs">31</text>`,
  ring: svg`<circle cx="50" cy="47" r="57.500" fill="#fff"/><circle cx="50" cy="47" r="40" fill="none" stroke="#964b87" stroke-width="21"/>`,
  mirror: svg`${tile("#c6c6c6")}<rect x="30" y="7" width="41" height="86" rx="7" fill="#111"/><rect x="32" y="9" width="37" height="82" rx="5" fill="#1c5c82"/><path d="M37 9h27q5 0 5 5v9Q48 40 42 91h-5q-5 0-5-5V14q0-5 5-5z" fill="#ef9c8e"/><path d="M69 21Q46 40 40 91h7Q52 50 69 34z" fill="#f7ddd5"/><path d="M69 34Q52 50 47 91l8 0Q58 62 69 50z" fill="#4ba3b8"/><rect x="44" y="10" width="13" height="3.500" rx="1.700" fill="#000"/>`,
  replit: svg`${tile("#151927")}<g fill="#ee6f2d"><rect x="27" y="19" width="26" height="20" rx="3"/><rect x="53" y="40" width="25" height="20" rx="3"/><rect x="27" y="61" width="26" height="20" rx="3"/></g>`,
  doctor: svg`${tile("#b9c3cb")}<rect x="3" y="3" width="93" height="94" rx="21" fill="#f2f4f7"/><path d="M38 15c-14-2-15 6-11 24q5 24 18 24t19-24c3-18 3-26-9-24" fill="none" stroke="#c2c5c9" stroke-width="4"/><path d="M36 15h6M52 15h6" stroke="#222" stroke-width="6"/><path d="M33 64q4 20 22 22 10-3 10-22 0-14 10-18 12 0 11 10" fill="none" stroke="#222" stroke-width="4"/><path d="M56 50h46l4 46v8H53v-8z" fill="#a7b0b5"/><path d="M53 97h53v7H53z" fill="#3b3f42"/><circle cx="79" cy="76" r="18" fill="#c9d0d4"/><circle cx="79" cy="78" r="12" fill="#e9edef" stroke="#8b9499" stroke-width="2"/><rect x="64" y="53" width="24" height="7" fill="#222"/><circle cx="79" cy="67" r="5" fill="#fff" stroke="#666" stroke-width="1.500"/><path d="M68 56q10-20 18 2" fill="none" stroke="#222" stroke-width="3"/>`,
  teams: svg`${tile("#fff")}<circle cx="52" cy="27" r="10" fill="#7b83eb"/><circle cx="74" cy="30" r="7" fill="#5059c9"/><path d="M69 42h16v21q0 9-10 9-5 0-6-2z" fill="#5059c9"/><path d="M35 42h34v22q0 18-17 18T35 66z" fill="#7b83eb"/><rect x="12" y="31" width="37" height="37" rx="4" fill="#4b50bd"/>${txt("T", 30.500, 60, 28, "#fff")}`,
  acrobat: svg`${tile("#a32418")}<path d="M48 21c7 2 0 26-8 40S24 82 22 77c-1-6 14-16 30-19s29-2 28 4c-1 8-18 0-26-11S43 21 48 21z" fill="none" stroke="#fff" stroke-width="4.500" stroke-linejoin="round"/>`,
  stack: svg`<path d="M20-9h34l6 12H20z" fill="#f4f4f4"/><rect x="12" y="-4" width="74" height="20" fill="#fff" stroke="#d2d2d2"/><rect x="7" y="3" width="83" height="104" fill="#fff"/><rect x="11" y="7" width="75" height="95" fill="none" stroke="#dadada"/><g transform="translate(17 32) scale(.5)"><path d=${LOGO} fill="none" stroke="#56b685" stroke-width="9"/></g>`,
  trash: svg`<path d="M6 6l12 92q2 8 32 8t32-8L94 6z" fill="#d9dadb"/><path d="M14 10l12 90q10 4 20 4L32 20z" fill="#e9eaeb"/><path d="M86 10L74 100q-8 4-16 4l14-84z" fill="#e2e3e4"/><ellipse cx="50" cy="8" rx="44" ry="10" fill="#b9babb"/><path d="M12 6l8-8 10 4 6-12 10 12 10-4 8-8 8 12 10 4-8 8-20 4-16-2z" fill="#efefef"/><path d="M26 2l10 2-4 9zM60-2l8 8-8 5zM44 6l6 10-10-2z" fill="#4b4b4b"/><path d="M36 2h10l-4 7z" fill="#3fae8f"/><path d="M54 6l8-4-2 10z" fill="#3c5fa8"/><path d="M68 4l8 3-8 5z" fill="#c9643c"/><ellipse cx="50" cy="8" rx="44" ry="10" fill="none" stroke="#e9e9e9" stroke-width="1.500"/>`,
};
const dockDefs = svg`<defs>
  <linearGradient id="dsky" x2="0" y2="1"><stop offset="0" stop-color="#5cc4fa"/><stop offset="1" stop-color="#3566ea"/></linearGradient>
  <linearGradient id="dblue" x2="0" y2="1"><stop offset="0" stop-color="#4aa0ea"/><stop offset="1" stop-color="#3a70e2"/></linearGradient>
  <linearGradient id="dmail" x2="0" y2="1"><stop offset="0" stop-color="#3a6ff0"/><stop offset="1" stop-color="#59c0fa"/></linearGradient>
  <linearGradient id="dgrey" x2="0" y2="1"><stop offset="0" stop-color="#d5dfe6"/><stop offset="1" stop-color="#8f8e8b"/></linearGradient>
  <linearGradient id="dgreen" x2="0" y2="1"><stop offset="0" stop-color="#88f07f"/><stop offset="1" stop-color="#57bd47"/></linearGradient>
</defs>`;

type DockItem = { art: string; running?: boolean; badge?: string } | "sep" | "sep2";
const DOCK: DockItem[] = [
  { art: "finder", running: true }, { art: "launchpad" }, { art: "chrome", running: true }, { art: "safari" },
  { art: "mail", running: true, badge: "6,138" }, { art: "calendar" }, { art: "notes", running: true }, { art: "keynote" },
  { art: "settings", badge: "1" }, { art: "spotify", running: true }, { art: "outlook", running: true }, { art: "excel", running: true },
  { art: "whatsapp", running: true }, { art: "word", running: true }, { art: "notion" }, { art: "ring" }, { art: "mirror" }, { art: "replit" },
  "sep", { art: "doctor" }, { art: "teams", running: true, badge: "8" }, { art: "acrobat", running: true },
  "sep2", { art: "stack" }, { art: "trash" },
];

@customElement("app-dock")
export class AppDock extends LitElement {
  static styles = [base, css`
    :host { margin: 5px 114px 0; height: 155px; border-radius: 50px; background: #727272; border: 2px solid #8d8d8d; }
    .row { display: flex; padding: 20px 0 0 4px; }
    .item { width: 133px; flex: none; display: flex; flex-direction: column; align-items: center; position: relative; }
    .art { display: block; overflow: visible; filter: drop-shadow(0 2px 2px rgba(0, 0, 0, 0.300)); }
    .dot { width: 8px; height: 8px; border-radius: 50%; background: #000; margin-top: 20px; }
    .sep { width: 59px; height: 114px; margin-top: -2px; display: flex; justify-content: center; }
    .sep2 { width: 62px; }
    .sep::before { content: ""; width: 2px; background: #4c4c4c; }
    .badge { position: absolute; top: -13px; left: 82px; min-width: 48px; height: 48px; padding: 0 8px; border-radius: 24px; background: #e05043; color: #fff; font-size: 26px; letter-spacing: -0.400px; display: grid; place-items: center; box-shadow: 0 0 6px rgba(0, 0, 0, 0.300); }
    .badge.wide { left: 57px; width: 76px; padding: 0; }
  `];
  render() {
    return html`<div class="row">${DOCK.map((d) =>
      typeof d === "string"
        ? html`<div class="sep ${d}"></div>`
        : html`<div class="item">
            <svg class="art" width="100" height="100" viewBox="0 0 100 100">${dockDefs}${dockArt[d.art]}</svg>
            ${d.running ? html`<div class="dot"></div>` : nothing}
            ${d.badge ? html`<div class="badge ${d.badge.length > 2 ? "wide" : ""}">${d.badge}</div>` : nothing}
          </div>`)}</div>`;
  }
}

@customElement("app-root")
export class AppRoot extends LitElement {
  static styles = [base, css`
    :host { width: 3420px; height: 2214px; overflow: hidden; background: linear-gradient(#292929 78px, #232323 2040px, #303030 2214px); }
    .window { border-radius: 20px; overflow: hidden; }
  `];
  render() {
    return html`<system-menubar></system-menubar><div class="window"><browser-bars></browser-bars><site-page></site-page></div><app-dock></app-dock>`;
  }
}
